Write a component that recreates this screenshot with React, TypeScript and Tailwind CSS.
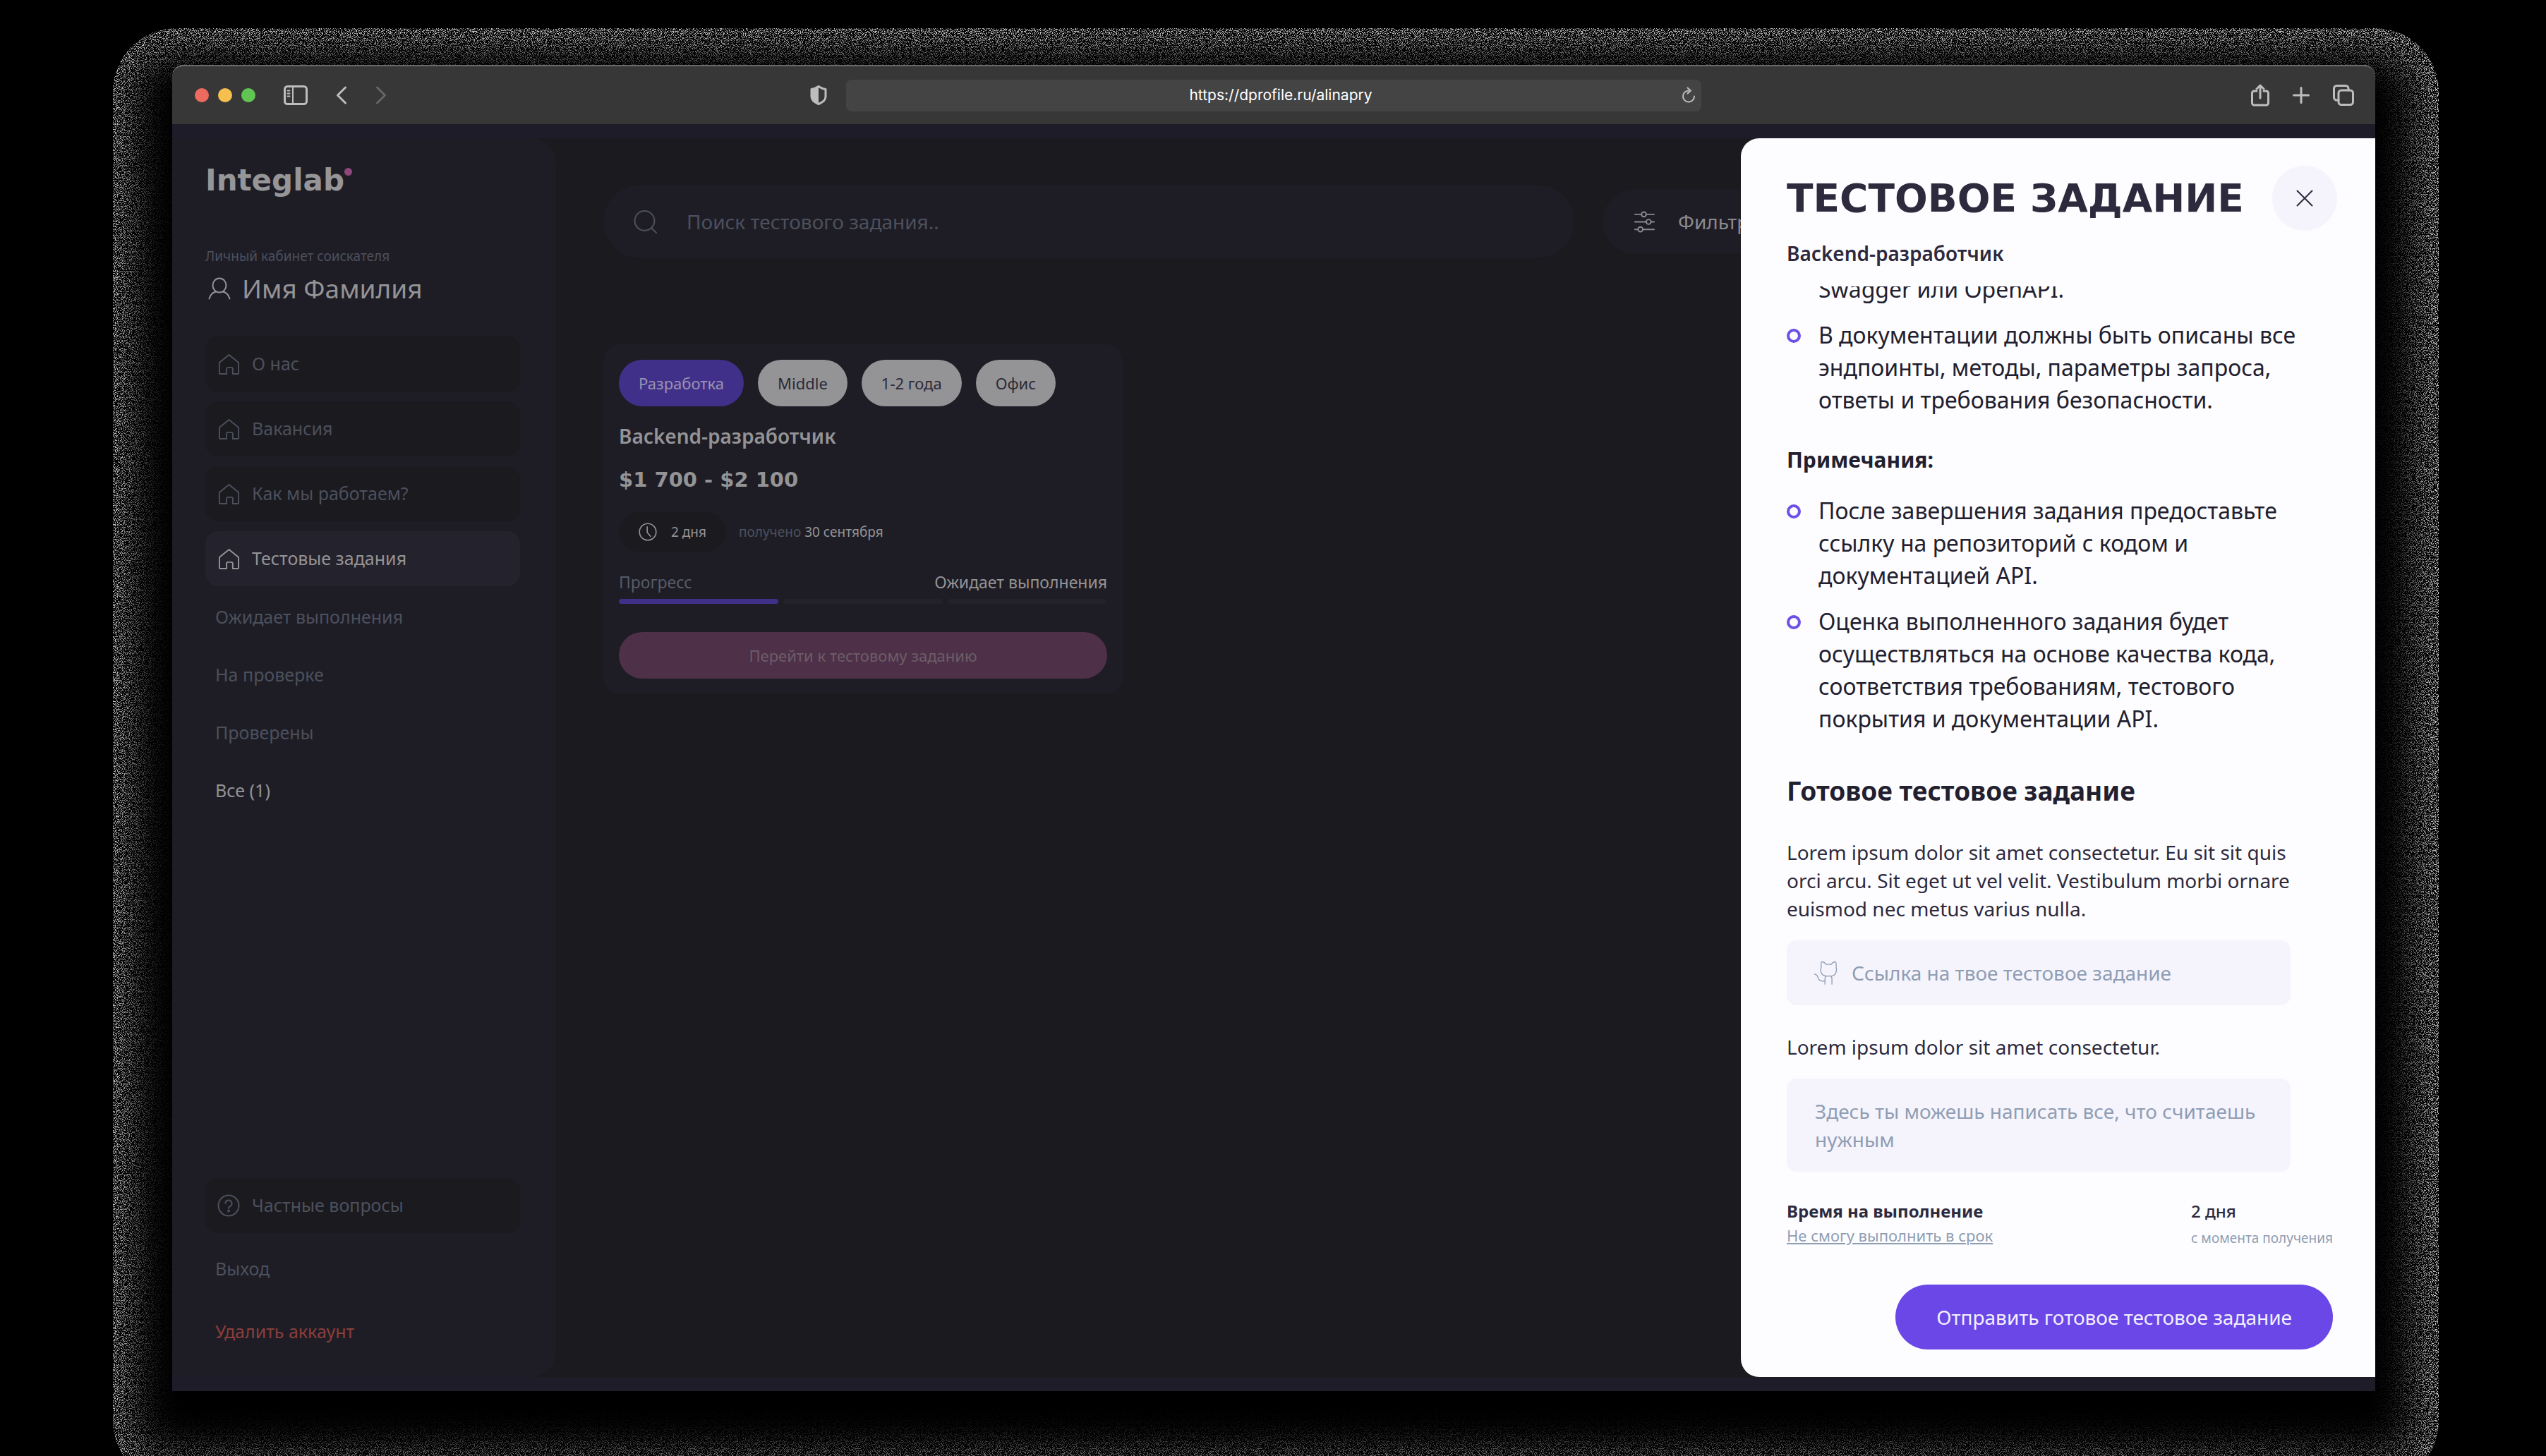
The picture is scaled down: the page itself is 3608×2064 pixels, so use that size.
import type { ReactNode } from "react";

type IconProps = { className?: string };

function Stroke({ className, box = "0 0 32 32", width = 2, children }: IconProps & { box?: string; width?: number; children: ReactNode }) {
  return (
    <svg viewBox={box} className={className} fill="none" stroke="currentColor" strokeWidth={width} strokeLinecap="round" strokeLinejoin="round" aria-hidden="true">
      {children}
    </svg>
  );
}

const HomeIcon = ({ className }: IconProps) => (
  <Stroke className={className} width={2}>
    <path d="M2 13.5 16 2l14 11.500V29a1 1 0 0 1-1 1h-7.500V22.500a2 2 0 0 0-2-2h-5a2 2 0 0 0-2 2V30H3a1 1 0 0 1-1-1Z" />
  </Stroke>
);
const QuestionIcon = ({ className }: IconProps) => (
  <Stroke className={className}>
    <circle cx="16" cy="16" r="14.500" />
    <path d="M11.500 13a4.500 4.500 0 1 1 6.500 4c-1.500.8-2 1.600-2 3" />
    <circle cx="16" cy="23.500" r="1" fill="currentColor" />
  </Stroke>
);
const UserIcon = ({ className }: IconProps) => (
  <Stroke className={className}>
    <ellipse cx="16" cy="11.500" rx="9.500" ry="10" />
    <path d="M1.500 30.500C3 25 6.500 21.500 11 20.500M30.500 30.500C29 25 25.500 21.500 21 20.500" />
  </Stroke>
);
const SearchIcon = ({ className }: IconProps) => (
  <Stroke className={className}>
    <circle cx="15" cy="14.500" r="13.500" />
    <path d="m24.500 24.500 6.500 6.500" />
  </Stroke>
);
const SlidersIcon = ({ className }: IconProps) => (
  <Stroke className={className} width={2}>
    <path d="M2 5h9M19 5h11M2 16h16M26 16h4M2 27h4M14 27h16" />
    <circle cx="15" cy="5" r="3.500" />
    <circle cx="22" cy="16" r="3.500" />
    <circle cx="10" cy="27" r="3.500" />
  </Stroke>
);
const ClockIcon = ({ className }: IconProps) => (
  <Stroke className={className} width={2}>
    <circle cx="16" cy="16" r="14.500" />
    <path d="M15 7v10l6 7" />
  </Stroke>
);
const CatIcon = ({ className }: IconProps) => (
  <Stroke className={className} box="36 66 100 102" width={4}>
    <path d="M66 92C66 82 63 72 69 70c7 0 15 6 19 12 6-2 14-2 20 0 4-6 11-12 18-12 6 2 4 12 4 22 4 14 1 36-20 39H86C63 128 61 106 66 92Z" />
    <path d="M82 166v-24q0-8 6-11M112 166v-24q0-8-6-11M38 123c12 1 12 9 16 19s14 12 28 10" />
  </Stroke>
);
const CloseIcon = ({ className }: IconProps) => (
  <Stroke className={className} box="0 0 24 24" width={2}>
    <path d="m1.500 1.500 21 21M22.500 1.500l-21 21" />
  </Stroke>
);
const PanelIcon = ({ className }: IconProps) => (
  <Stroke className={className} box="0 0 34 28" width={3}>
    <rect x="1.500" y="1.500" width="31" height="25" rx="4" />
    <path d="M13 2v24" strokeWidth={2} />
    <path d="M5.500 7.500h3M5.500 11.500h3M5.500 15.500h3" strokeWidth={2} />
  </Stroke>
);
const ChevronIcon = ({ className }: IconProps) => (
  <Stroke className={className} box="0 0 16 26" width={3}>
    <path d="M13.500 2 2.500 13l11 11" />
  </Stroke>
);
const ShieldIcon = ({ className }: IconProps) => (
  <svg viewBox="0 0 24 28" className={className} aria-hidden="true">
    <path d="M12 1.500C15 3.500 18 5 22 5.500V16c0 5-4 8-10 10.500C6 24 2 21 2 16V5.500C6 5 9 3.500 12 1.500Z" fill="none" stroke="currentColor" strokeWidth="3" strokeLinejoin="round" />
    <path d="M12 1.500C9 3.500 6 5 2 5.500V16c0 5 4 8 10 10.500Z" fill="currentColor" />
  </svg>
);
const ReloadIcon = ({ className }: IconProps) => (
  <Stroke className={className} box="0 0 20 24" width={2}>
    <path d="M10 5.500a8 8 0 1 0 8 8M8.500 1.500l4.500 4-4.500 4" />
  </Stroke>
);
const ShareIcon = ({ className }: IconProps) => (
  <Stroke className={className} box="0 0 26 32" width={3}>
    <path d="M8 10H4.500a3 3 0 0 0-3 3v14a3 3 0 0 0 3 3h17a3 3 0 0 0 3-3V13a3 3 0 0 0-3-3H18" />
    <path d="M13 20V2M8 7l5-5 5 5" />
  </Stroke>
);
const PlusIcon = ({ className }: IconProps) => (
  <Stroke className={className} box="0 0 24 24" width={3}>
    <path d="M12 1.500v21M1.500 12h21" />
  </Stroke>
);
const TabsIcon = ({ className }: IconProps) => (
  <Stroke className={className} box="0 0 30 30" width={3}>
    <rect x="8" y="8" width="20.500" height="20.500" rx="4" />
    <path d="M8 22H5.500a4 4 0 0 1-4-4V5.500a4 4 0 0 1 4-4H18a4 4 0 0 1 4 4V8" />
  </Stroke>
);

/* Grainy glow that surrounds the browser window. */
function GrainHalo() {
  return (
    <div className="absolute -top-[52px] -right-[90px] -bottom-[132px] -left-[84px] overflow-hidden rounded-[90px]" aria-hidden="true">
      <svg className="h-full w-full">
        <filter id="grain" x="0" y="0" width="100%" height="100%" colorInterpolationFilters="sRGB">
          <feTurbulence type="fractalNoise" baseFrequency="0.9" numOctaves="2" seed="7" />
          <feColorMatrix values="10 0 0 0 -5.100  10 0 0 0 -5.100  10 0 0 0 -5.100  0 0 0 0 1" />
        </filter>
        <rect width="100%" height="100%" filter="url(#grain)" />
      </svg>
    </div>
  );
}

function Toolbar() {
  return (
    <header className="grid h-[84px] grid-cols-[minmax(0,1fr)_minmax(0,1212px)_minmax(0,1fr)] items-center rounded-t-2xl border-t-2 border-[#6a6a6a] bg-[#373737] text-[#bdbdbd]">
      <div className="flex items-center pr-[27px] pl-8">
        <div className="flex gap-[13px]">
          <span className="size-5 rounded-full bg-[#ed6a5e]" />
          <span className="size-5 rounded-full bg-[#f4bf4f]" />
          <span className="size-5 rounded-full bg-[#61c554]" />
        </div>
        <button aria-label="Боковая панель" className="ml-10"><PanelIcon className="h-7 w-[34px]" /></button>
        <button aria-label="Назад" className="ml-10"><ChevronIcon className="h-[26px] w-4" /></button>
        <button aria-label="Вперёд" className="ml-10 text-[#666666]"><ChevronIcon className="h-[26px] w-4 rotate-180" /></button>
        <ShieldIcon className="ml-auto h-7 w-6" />
      </div>
      <div className="flex h-[45px] items-center rounded-lg bg-[#444444] pr-2 pl-12">
        <input aria-label="Адрес" defaultValue="https://dprofile.ru/alinapry" className="min-w-0 flex-1 bg-transparent text-center font-['Inter',sans-serif] text-[21px] text-white outline-none" />
        <button aria-label="Обновить"><ReloadIcon className="h-6 w-5" /></button>
      </div>
      <div className="flex items-center justify-end gap-[33px] pr-[30px]">
        <button aria-label="Поделиться"><ShareIcon className="h-8 w-[26px]" /></button>
        <button aria-label="Новая вкладка"><PlusIcon className="size-6" /></button>
        <button aria-label="Вкладки"><TabsIcon className="size-[30px]" /></button>
      </div>
    </header>
  );
}

const navItems = [
  { label: "О нас", active: false },
  { label: "Вакансия", active: false },
  { label: "Как мы работаем?", active: false },
  { label: "Тестовые задания", active: true },
];
const filters = ["Ожидает выполнения", "На проверке", "Проверены"];

function Sidebar() {
  return (
    <aside className="flex w-[544px] shrink-0 flex-col rounded-r-[36px] bg-[#1e1d25] pt-9 pr-[51px] pb-[43px] pl-[47px] text-[25px] text-[#4c505d]">
      <div className="flex items-start font-['DejaVu_Sans',sans-serif] text-[42px] leading-[48px] font-bold text-[#969598]">
        Integlab
        <span className="mt-1.5 size-[11px] rounded-full bg-[#8f477b]" />
      </div>
      <p className="mt-[71px] text-[19px] leading-6">Личный кабинет соискателя</p>
      <div className="mt-2.5 flex items-center gap-4 pl-1 text-[#949396]">
        <UserIcon className="size-8" />
        <span className="text-[37px] leading-[48px]">Имя Фамилия</span>
      </div>
      <nav className="mt-11 flex flex-col">
        <div className="flex flex-col gap-[14px]">
          {navItems.map(({ label, active }) => (
            <a key={label} href="#" className={active ? "flex h-[78px] items-center gap-[17px] rounded-[18px] bg-[#24222c] pl-[18px] text-[#949396]" : "flex h-[78px] items-center gap-[17px] rounded-[18px] bg-[#1b1a1f] pl-[18px]"}>
              <HomeIcon className="size-[31px]" />
              {label}
            </a>
          ))}
        </div>
        <div className="mt-0.5 flex flex-col pl-[14px] leading-[82px]">
          {filters.map((label) => (
            <a key={label} href="#">{label}</a>
          ))}
          <a href="#" className="text-[#949396]">Все (1)</a>
        </div>
      </nav>
      <div className="mt-auto flex flex-col items-stretch">
        <a href="#" className="flex h-[78px] items-center gap-[17px] rounded-[18px] bg-[#1b1a1f] pl-[17px]">
          <QuestionIcon className="size-8" />
          Частные вопросы
        </a>
        <button className="mt-7 pl-[14px] text-left leading-[44px]">Выход</button>
        <button className="mt-[45px] pl-[14px] text-left leading-[44px] text-[#8b3e3c]">Удалить аккаунт</button>
      </div>
    </aside>
  );
}

function TaskCard() {
  return (
    <article className="mt-[122px] w-[736px] rounded-3xl bg-[#1e1d25] p-[22px] text-[22px] text-[#949396]">
      <ul className="flex gap-5 leading-[66px]">
        <li className="rounded-full bg-[#41308a] px-7 text-[#9993b0]">Разработка</li>
        {["Middle", "1-2 года", "Офис"].map((tag) => (
          <li key={tag} className="rounded-full bg-[#949396] px-7 text-[#2c2a38]">{tag}</li>
        ))}
      </ul>
      <h2 className="mt-[22px] text-[28px] leading-10 font-semibold">Backend-разработчик</h2>
      <p className="mt-6 font-['DejaVu_Sans',sans-serif] text-[29px] leading-9 font-bold">$1 700 - $2 100</p>
      <div className="mt-7 flex items-center gap-[18px] text-[19px]">
        <span className="flex h-14 items-center gap-5 rounded-full bg-[#1b1a1f] px-7">
          <ClockIcon className="size-[26px]" />
          2 дня
        </span>
        <span><span className="text-[#4c505d]">получено</span> 30 сентября</span>
      </div>
      <div className="mt-[27px] flex justify-between text-[23px] leading-8">
        <span className="text-[#565b67]">Прогресс</span>
        <span>Ожидает выполнения</span>
      </div>
      <div className="mt-2 grid grid-cols-3 gap-[7px]">
        <span className="h-[7px] rounded-sm bg-[#41308a]" />
        <span className="h-[7px] rounded-sm bg-[#23212b]" />
        <span className="h-[7px] rounded-sm bg-[#23212b]" />
      </div>
      <button className="mt-10 w-full rounded-full bg-[#4f3049] leading-[66px] text-[#6c5e67]">Перейти к тестовому заданию</button>
    </article>
  );
}

function Bullet({ children }: { children: ReactNode }) {
  return (
    <li className="flex gap-[25px]">
      <span className="mt-[14px] size-5 shrink-0 rounded-full border-4 border-[#6e50e6]" />
      <span>{children}</span>
    </li>
  );
}

function TaskDrawer() {
  return (
    <section role="dialog" aria-labelledby="drawer-title" className="absolute inset-y-5 right-0 flex w-[899px] flex-col rounded-l-[26px] bg-[#fdfdff] pt-[39px] pr-[60px] pb-[39px] pl-[65px] text-[28px] leading-10 text-[#2d2a3d]">
      <div className="-mr-1.5 flex items-center justify-between">
        <h1 id="drawer-title" className="font-['DejaVu_Sans',sans-serif] text-[55px] font-bold whitespace-nowrap">ТЕСТОВОЕ ЗАДАНИЕ</h1>
        <button aria-label="Закрыть" className="-ml-10 flex size-[92px] shrink-0 items-center justify-center rounded-full bg-[#f5f4fd]">
          <CloseIcon className="size-6" />
        </button>
      </div>
      <p className="mt-3 font-semibold">Backend-разработчик</p>

      <div className="mt-[27px] flex min-h-0 flex-1 flex-col justify-end overflow-hidden">
        <div className="w-[735px] text-[32px] leading-[46px] text-[#22202e]">
          <p className="pl-[45px]">Swagger или OpenAPI.</p>
          <ul className="mt-[19px]">
            <Bullet>В документации должны быть описаны все эндпоинты, методы, параметры запроса, ответы и требования безопасности.</Bullet>
          </ul>
          <h2 className="mt-[39px] text-[30px] font-bold">Примечания:</h2>
          <ul className="mt-[26px] flex flex-col gap-[19px]">
            <Bullet>После завершения задания предоставьте ссылку на репозиторий с кодом и документацией API.</Bullet>
            <Bullet>Оценка выполненного задания будет осуществляться на основе качества кода, соответствия требованиям, тестового покрытия и документации API.</Bullet>
          </ul>
          <h2 className="mt-14 text-[37px] font-bold">Готовое тестовое задание</h2>
        </div>
        <p className="mt-11 w-[722px]">Lorem ipsum dolor sit amet consectetur. Eu sit sit quis orci arcu. Sit eget ut vel velit. Vestibulum morbi ornare euismod nec metus varius nulla.</p>
        <label className="mt-[25px] flex h-[92px] w-[714px] shrink-0 items-center gap-5 rounded-[14px] bg-[#f5f4fd] px-[39px] text-[#8f9db3]">
          <CatIcon className="h-[34px] w-[33px] shrink-0" />
          <input type="url" aria-label="Ссылка на твое тестовое задание" placeholder="Ссылка на твое тестовое задание" className="min-w-0 flex-1 bg-transparent outline-none placeholder:text-[#8f9db3]" />
        </label>
        <label htmlFor="comment" className="mt-[39px]">Lorem ipsum dolor sit amet consectetur.</label>
        <textarea id="comment" rows={2} placeholder="Здесь ты можешь написать все, что считаешь нужным" className="mt-[25px] block h-[132px] w-[714px] shrink-0 resize-none overflow-hidden rounded-[14px] bg-[#f5f4fd] px-10 py-[26px] outline-none placeholder:text-[#8f9db3]" />
      </div>

      <div className="mt-10 flex justify-between leading-8">
        <div className="flex flex-col gap-0.5">
          <span className="text-[24px] font-bold">Время на выполнение</span>
          <a href="#" className="text-[22px] text-[#8f9db3] underline">Не смогу выполнить в срок</a>
        </div>
        <div className="flex flex-col gap-1.5">
          <span className="text-[24px] font-medium">2 дня</span>
          <span className="text-[19px] text-[#8f9db3]">с момента получения</span>
        </div>
      </div>
      <button className="mt-[50px] self-end rounded-full bg-[#6a47e6] px-[58px] leading-[92px] text-[#f3f0ff]">Отправить готовое тестовое задание</button>
    </section>
  );
}

export default function App() {
  return (
    <div className="flex h-screen flex-col overflow-hidden bg-black pt-[92px] pr-[242px] pb-[92px] pl-[244px] font-['Noto_Sans',sans-serif]">
      <div className="relative flex min-h-0 flex-1 flex-col">
        <GrainHalo />
        <div className="relative flex min-h-0 flex-1 flex-col rounded-t-2xl shadow-[0_36px_64px_60px_#000000]">
          <Toolbar />
          <div className="relative flex min-h-0 flex-1 bg-[#1f1c2a] py-5">
            <div className="flex min-w-0 flex-1 bg-[#1b1a1f]">
              <Sidebar />
              <main className="min-w-0 flex-1 pt-[66px] pl-[67px]">
                <div className="flex items-center gap-10 text-[28px]">
                  <label className="flex h-[104px] max-w-[1376px] flex-1 items-center gap-[42px] rounded-full bg-[#1e1d25] pl-[43px] text-[#4c505d]">
                    <SearchIcon className="size-[33px] shrink-0" />
                    <input type="search" aria-label="Поиск тестового задания" placeholder="Поиск тестового задания.." className="min-w-0 flex-1 bg-transparent outline-none placeholder:text-[#4c505d]" />
                  </label>
                  <button className="flex h-[92px] items-center gap-8 rounded-full bg-[#1e1d25] px-11 text-[#8b898d]">
                    <SlidersIcon className="size-[31px]" />
                    Фильтры
                  </button>
                </div>
                <TaskCard />
              </main>
            </div>
            <TaskDrawer />
          </div>
        </div>
      </div>
    </div>
  );
}
